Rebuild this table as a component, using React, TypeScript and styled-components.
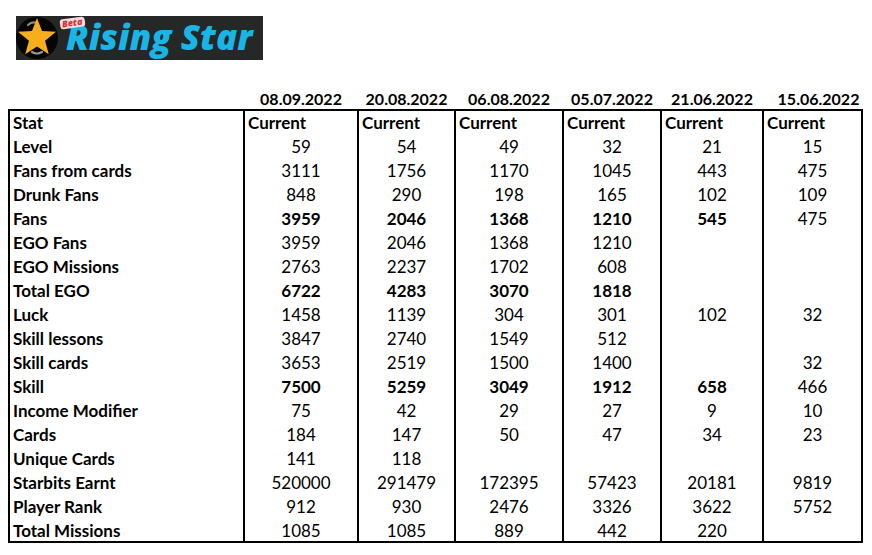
import React from "react";
import styled, { createGlobalStyle } from "styled-components";

const GlobalStyle = createGlobalStyle`
  html, body { margin: 0; padding: 0; background: #ffffff; }
  body { font-family: Lato, "Liberation Sans", Arial, sans-serif; color: #000; }
  * { box-sizing: border-box; }
`;

const COLS = "233px 114px 97px 108px 98px 102px 99px";

const Page = styled.div`
  width: 872px;
  height: 555px;
  padding: 16px 0 0 8px;
  display: flex;
  flex-direction: column;
`;

const LogoBox = styled.div`
  position: relative;
  margin-left: 8px;
  width: 247px;
  height: 44px;
  background: #262727;
  display: flex;
  align-items: center;
`;

const LogoText = styled.span`
  font-family: "Open Sans", "Liberation Sans", sans-serif;
  font-weight: 800;
  font-style: italic;
  font-size: 35px;
  line-height: 1;
  color: #19b5e6;
  margin-left: 6px;
  margin-top: -3px;
  letter-spacing: 0.1px;
  white-space: nowrap;
`;

const BetaTag = styled.span`
  position: absolute;
  left: 44px;
  top: 2px;
  font-family: "Open Sans", "Liberation Sans", sans-serif;
  font-weight: 800;
  font-style: italic;
  font-size: 9px;
  line-height: 10px;
  color: #d9323a;
  background: #f6dede;
  border-radius: 3px;
  padding: 0 2px;
  transform: rotate(-8deg);
`;

const DateRow = styled.div`
  display: grid;
  grid-template-columns: ${COLS};
  margin-top: 28px;
  padding-left: 2px;
  height: 21px;
`;

const DateCell = styled.div<{ $shift?: number }>`
  font-weight: 700;
  font-size: 16px;
  line-height: 21px;
  text-align: center;
  padding-left: ${(p) => (p.$shift ?? 0) + 2}px;
  white-space: nowrap;
`;

const Table = styled.div`
  width: 855px;
  border: 2px solid #000;
`;

const Row = styled.div<{ $h?: number }>`
  display: grid;
  grid-template-columns: ${COLS};
  height: ${(p) => p.$h ?? 24}px;
`;

const LabelCell = styled.div`
  font-weight: 700;
  font-size: 17px;
  line-height: 24px;
  padding-left: 3px;
  white-space: nowrap;
`;

const ValueCell = styled.div<{ $bold?: boolean; $left?: boolean }>`
  border-left: 2px solid #000;
  font-size: 17px;
  font-weight: ${(p) => (p.$bold ? 700 : 400)};
  line-height: 24px;
  text-align: ${(p) => (p.$left ? "left" : "center")};
  padding-left: ${(p) => (p.$left ? "3px" : "0")};
  white-space: nowrap;
`;

const dates = ["08.09.2022", "20.08.2022", "06.08.2022", "05.07.2022", "21.06.2022", "15.06.2022"];

type RowData = { label: string; values: string[]; bold?: number };

const rows: RowData[] = [
  { label: "Level", values: ["59", "54", "49", "32", "21", "15"] },
  { label: "Fans from cards", values: ["3111", "1756", "1170", "1045", "443", "475"] },
  { label: "Drunk Fans", values: ["848", "290", "198", "165", "102", "109"] },
  { label: "Fans", values: ["3959", "2046", "1368", "1210", "545", "475"], bold: 5 },
  { label: "EGO Fans", values: ["3959", "2046", "1368", "1210", "", ""] },
  { label: "EGO Missions", values: ["2763", "2237", "1702", "608", "", ""] },
  { label: "Total EGO", values: ["6722", "4283", "3070", "1818", "", ""], bold: 4 },
  { label: "Luck", values: ["1458", "1139", "304", "301", "102", "32"] },
  { label: "Skill lessons", values: ["3847", "2740", "1549", "512", "", ""] },
  { label: "Skill cards", values: ["3653", "2519", "1500", "1400", "", "32"] },
  { label: "Skill", values: ["7500", "5259", "3049", "1912", "658", "466"], bold: 5 },
  { label: "Income Modifier", values: ["75", "42", "29", "27", "9", "10"] },
  { label: "Cards", values: ["184", "147", "50", "47", "34", "23"] },
  { label: "Unique Cards", values: ["141", "118", "", "", "", ""] },
  { label: "Starbits Earnt", values: ["520000", "291479", "172395", "57423", "20181", "9819"] },
  { label: "Player Rank", values: ["912", "930", "2476", "3326", "3622", "5752"] },
  { label: "Total Missions", values: ["1085", "1085", "889", "442", "220", ""] },
];

function StarLogo() {
  const cx = 21;
  const cy = 22;
  const pts: string[] = [];
  for (let i = 0; i < 10; i++) {
    const r = i % 2 === 0 ? 20 : 8.5;
    const a = -Math.PI / 2 + (i * Math.PI) / 5;
    pts.push(`${(cx + r * Math.cos(a)).toFixed(2)},${(cy + r * Math.sin(a)).toFixed(2)}`);
  }
  return (
    <svg width="44" height="44" viewBox="0 0 44 44" style={{ flexShrink: 0 }}>
      <circle cx={cx} cy={cy} r={21} fill="#050505" />
      <path d="M12 9 q4 -4 9 -2" stroke="#8a8a8a" strokeWidth="2.2" fill="none" strokeLinecap="round" />
      <path d="M16 36 q5 3 10 0" stroke="#9a9a9a" strokeWidth="2.2" fill="none" strokeLinecap="round" />
      <polygon points={pts.join(" ")} fill="#f6ae1c" />
    </svg>
  );
}

export default function App() {
  return (
    <>
      <GlobalStyle />
      <Page>
        <LogoBox>
          <StarLogo />
          <BetaTag>Beta</BetaTag>
          <LogoText>Rising Star</LogoText>
        </LogoBox>
        <DateRow>
          <div />
          {dates.map((d, i) => (
            <DateCell key={d} $shift={i === 5 ? 12 : 0}>
              {d}
            </DateCell>
          ))}
        </DateRow>
        <Table>
          <Row>
            <LabelCell>Stat</LabelCell>
            {dates.map((d) => (
              <ValueCell key={d} $bold $left>
                Current
              </ValueCell>
            ))}
          </Row>
          {rows.map((r, idx) => (
            <Row key={r.label} $h={idx === rows.length - 1 ? 22 : 24}>
              <LabelCell>{r.label}</LabelCell>
              {r.values.map((v, i) => (
                <ValueCell key={i} $bold={r.bold !== undefined && i < r.bold}>
                  {v}
                </ValueCell>
              ))}
            </Row>
          ))}
        </Table>
      </Page>
    </>
  );
}
